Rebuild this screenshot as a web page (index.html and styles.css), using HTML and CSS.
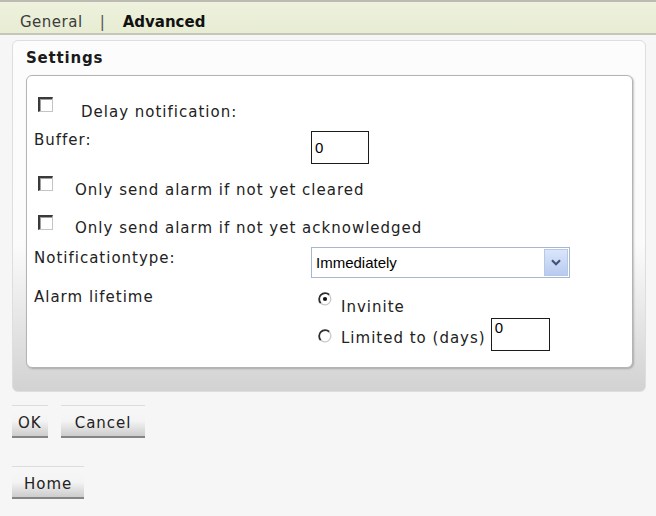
FILE: index.html
```html
<!DOCTYPE html>
<html lang="en">
<head>
<meta charset="utf-8">
<title>Advanced settings</title>
<link rel="stylesheet" href="styles.css">
</head>
<body>
<div class="tabs">
  <span class="tab">General</span><span class="sep">|</span><span class="tab active">Advanced</span>
</div>
<div class="panel">
  <h2 class="title">Settings</h2>
  <div class="box">
    <div class="row row-a">
      <input class="cb" type="checkbox"><span class="lbl lbl-wide">Delay notification:</span>
    </div>
    <div class="row grid row-b">
      <span class="lbl">Buffer:</span>
      <input class="field" type="text" value="0">
    </div>
    <div class="row row-c">
      <input class="cb" type="checkbox"><span class="lbl">Only send alarm if not yet cleared</span>
    </div>
    <div class="row row-d">
      <input class="cb" type="checkbox"><span class="lbl">Only send alarm if not yet acknowledged</span>
    </div>
    <div class="row grid row-e">
      <span class="lbl">Notificationtype:</span>
      <div class="select">
        <span class="select-text">Immediately</span>
        <span class="select-btn"><svg width="10" height="7" viewBox="0 0 10 7"><path d="M1 1.2 L5 5.2 L9 1.2" stroke="#3f5479" stroke-width="2.2" fill="none"/></svg></span>
      </div>
    </div>
    <div class="row grid row-f">
      <span class="lbl">Alarm lifetime</span>
      <div class="opt">
        <svg class="radio" width="14" height="14" viewBox="0 0 14 14"><circle cx="7" cy="7" r="6" fill="#fff"/><path d="M2.76 11.24 A6 6 0 0 1 11.24 2.76" stroke="#2e2e2e" stroke-width="1.8" fill="none"/><path d="M11.24 2.76 A6 6 0 0 1 2.76 11.24" stroke="#c8c8c8" stroke-width="1.3" fill="none"/><circle cx="7" cy="7" r="2.1" fill="#111"/></svg>
        <span class="lbl opt-lbl">Invinite</span>
      </div>
    </div>
    <div class="row grid row-g">
      <span></span>
      <div class="opt">
        <svg class="radio" width="14" height="14" viewBox="0 0 14 14"><circle cx="7" cy="7" r="6" fill="#fff"/><path d="M2.76 11.24 A6 6 0 0 1 11.24 2.76" stroke="#2e2e2e" stroke-width="1.8" fill="none"/><path d="M11.24 2.76 A6 6 0 0 1 2.76 11.24" stroke="#c8c8c8" stroke-width="1.3" fill="none"/></svg>
        <span class="lbl opt-lbl">Limited to (days)</span>
        <input class="field field-top" type="text" value="0">
      </div>
    </div>
  </div>
</div>
<div class="actions actions-first">
  <span class="btn btn-ok">OK</span><span class="btn btn-cancel">Cancel</span>
</div>
<div class="actions actions-second">
  <span class="btn btn-home">Home</span>
</div>
</body>
</html>
```

FILE: styles.css
```css
* { box-sizing: border-box; }
html, body { margin: 0; padding: 0; }
body {
  width: 656px;
  height: 516px;
  overflow: hidden;
  background: #f6f6f6;
  font-family: "DejaVu Sans", Verdana, sans-serif;
  font-size: 15px;
  color: #222;
}

.tabs {
  display: flex;
  height: 35px;
  border-top: 2px solid #bcbcb3;
  border-bottom: 2px solid #c5c5bb;
  background: linear-gradient(#eef2dd, #e7ecd3);
  padding: 11px 0 0 20px;
  line-height: 18px;
}
.tab { color: #3c3c3c; letter-spacing: 0.5px; }
.tab.active { font-weight: bold; color: #111; letter-spacing: 0; }
.sep { margin: 0 18px 0 17px; color: #555; }

.panel {
  margin: 5px 10px 0 12px;
  height: 352px;
  border: 1px solid #dedede;
  border-radius: 6px;
  background: linear-gradient(#fcfcfc 0%, #fbfbfb 58%, #d2d2d2 100%);
  padding: 8px 12px 0 13px;
}
.title {
  margin: 0;
  font-size: 15px;
  line-height: 18px;
  font-weight: bold;
  letter-spacing: 0.8px;
  color: #1a1a1a;
}
.box {
  margin-top: 8px;
  height: 293px;
  border: 1px solid #b4b4b4;
  border-radius: 6px;
  background: #fff;
  box-shadow: 1px 1px 2px rgba(0, 0, 0, 0.22);
  padding: 17px 0 0 7px;
}

.row { display: flex; align-items: flex-start; }
.grid { display: grid; grid-template-columns: 277px 1fr; align-items: start; }

.lbl { line-height: 18px; letter-spacing: 1px; white-space: nowrap; }

.cb {
  appearance: none;
  -webkit-appearance: none;
  width: 15px;
  height: 15px;
  margin: 0 22px 0 4px;
  border-style: solid;
  border-width: 2px 1px 1px 2px;
  border-color: #3a3a3a #c4c4c4 #c4c4c4 #3a3a3a;
  box-shadow: inset 1px 1px 0 #a0a0a0;
  background: #fff;
}

.row-a { height: 31px; }
.row-a .cb { margin-top: 4px; margin-right: 28px; }
.row-a .lbl { margin-top: 10px; }

.row-b { height: 47px; }
.row-b .lbl { margin-top: 7px; }
.row-b .field { margin-top: 7px; width: 58px; }

.row-c { height: 39px; }
.row-c .cb { margin-top: 5px; }
.row-c .lbl { margin-top: 10px; }

.row-d { height: 33px; }
.row-d .cb { margin-top: 5px; }
.row-d .lbl { margin-top: 9px; }

.row-e { height: 38px; }
.row-e .lbl { margin-top: 6px; }

.row-f { height: 34px; }
.row-f > .lbl { margin-top: 7px; }
.row-f .radio { margin-top: 11px; }
.row-f .opt-lbl { margin-top: 17px; }

.row-g { height: 36px; }
.row-g .radio { margin-top: 14px; }
.row-g .opt-lbl { margin-top: 14px; }
.row-g .field { margin-top: 3px; margin-left: 5px; }

.field {
  width: 59px;
  height: 33px;
  border: 1px solid #1c1c1c;
  padding: 0 3px;
  font-family: "Liberation Sans", Arial, sans-serif;
  font-size: 15px;
  color: #000;
  background: #fff;
  outline: none;
}
.field-top { padding-top: 0; padding-bottom: 14px; }

.select {
  display: flex;
  width: 259px;
  height: 31px;
  margin-top: 4px;
  border: 1px solid #a6b8d0;
  background: #fff;
  font-family: "Liberation Sans", Arial, sans-serif;
  font-size: 15px;
  color: #000;
}
.select-text { flex: 1; padding: 6px 0 0 4px; line-height: 18px; }
.select-btn {
  width: 24px;
  margin: 1px;
  border: 1px solid #b6c8ea;
  background: linear-gradient(#dae5fa, #b8cbf0);
  display: flex;
  align-items: center;
  justify-content: center;
}

.opt { display: flex; align-items: flex-start; padding-left: 7px; }
.radio { flex: none; margin-right: 9px; }

.actions { display: flex; gap: 13px; padding-left: 12px; }
.actions-first { margin-top: 13px; }
.actions-second { margin-top: 28px; }
.btn {
  display: block;
  height: 33px;
  border-top: 1px solid #dcdcdc;
  border-bottom: 2px solid #858585;
  padding-top: 8px;
  line-height: 18px;
  letter-spacing: 1px;
  color: #222;
  background: linear-gradient(#f7f7f7 0%, #f4f4f4 50%, #d8d8d8 85%, #cdcdcd 100%);
}
.btn-ok { padding-left: 6px; padding-right: 6px; }
.btn-cancel { padding-left: 14px; padding-right: 14px; }
.btn-home { padding-left: 12px; padding-right: 12px; }
```
